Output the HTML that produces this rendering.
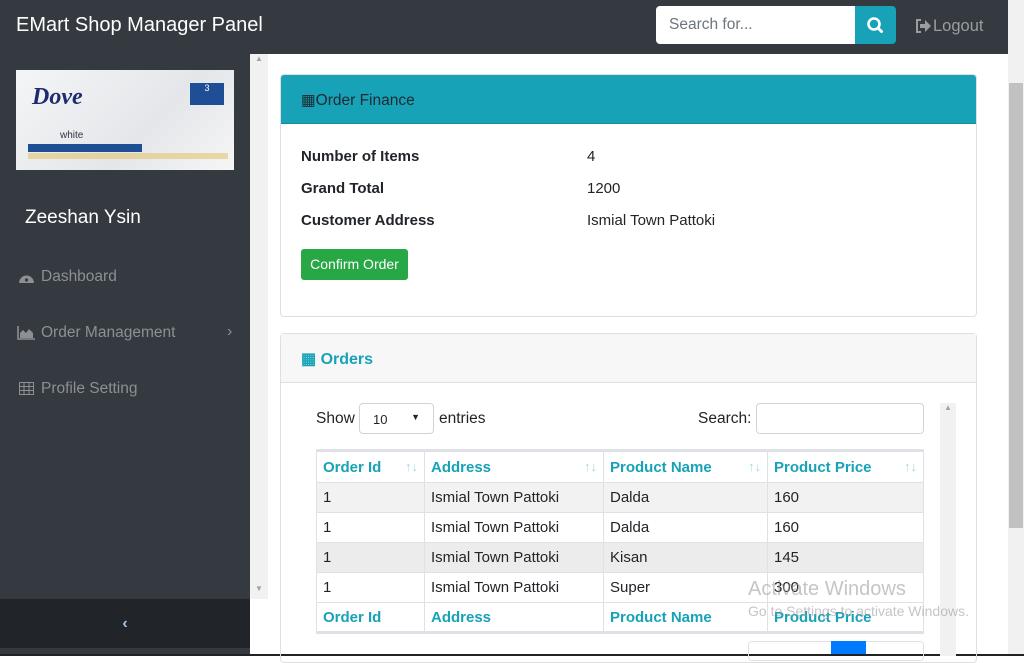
<!DOCTYPE html>
<html><head><meta charset="utf-8"><style>
*{box-sizing:border-box;margin:0;padding:0}
body{width:1024px;height:656px;overflow:hidden;background:#fff;font-family:"Liberation Sans",sans-serif;position:relative;color:#212529}
.a{position:absolute}
.nav{left:0;top:0;width:1008px;height:54px;background:#343a40}
.side{left:0;top:54px;width:250px;height:545px;background:#343a40}
.menu{color:#8c9094;font-size:15.5px;left:41px}
.ic{position:absolute;left:18px;color:#8c9094;font-size:14px}
td,th{font-size:15px;text-align:left;padding:0 6px;border:1px solid #dee2e6;height:30px}
th{color:#17a2b8;font-weight:bold}
table{border-collapse:collapse;position:absolute;left:316px;top:449px;width:608px;border-top:3px solid #dee2e6;border-bottom:3px solid #dee2e6}
.so{float:right;color:#a8d9e2;font-size:13px;font-weight:normal}
</style></head><body>
<div class="a nav"></div>
<div class="a" style="left:16px;top:14px;color:#fff;font-size:20px">EMart Shop Manager Panel</div>
<div class="a" style="left:656px;top:6px;width:200px;height:38px;background:#fff;border-radius:4px 0 0 4px;padding:10px 13px;color:#6c757d;font-size:15.5px">Search for...</div>
<div class="a" style="left:855px;top:6px;width:41px;height:38px;background:#17a2b8;border-radius:0 4px 4px 0">
<svg width="41" height="38"><circle cx="19" cy="18" r="5.5" fill="none" stroke="#fff" stroke-width="2.6"/><line x1="23" y1="22" x2="26.5" y2="25.5" stroke="#fff" stroke-width="3" stroke-linecap="round"/></svg></div>
<svg class="a" style="left:915px;top:19px" width="16" height="14"><path d="M6 1H2v12h4" fill="none" stroke="#9a9da1" stroke-width="2"/><path d="M5 5h5V1l6 6-6 6V9H5z" fill="#9a9da1"/></svg>
<div class="a" style="left:933px;top:17px;color:#9a9da1;font-size:16.5px">Logout</div>
<div class="a side"></div>
<div class="a" style="left:16px;top:70px;width:218px;height:100px;background:linear-gradient(135deg,#f4f5f6,#e4e6ea 60%,#f6f6f6)">
<div class="a" style="left:16px;top:14px;font:italic bold 24px 'Liberation Serif',serif;color:#1c2d6e">Dove</div>
<div class="a" style="left:174px;top:13px;width:34px;height:22px;background:#1d4e96;color:#fff;font-size:9px;text-align:center">3</div>
<div class="a" style="left:44px;top:60px;font-size:10px;color:#334">white</div>
<div class="a" style="left:12px;top:74px;width:114px;height:8px;background:#1d4e96"></div>
<div class="a" style="left:12px;top:83px;width:200px;height:6px;background:#e3c46e;opacity:.6"></div>
</div>
<div class="a" style="left:25px;top:207px;color:#fff;font-size:19px">Zeeshan Ysin</div>
<svg class="a" style="left:18px;top:270px" width="17" height="14"><path d="M1 13A7.5 7.5 0 1 1 16 13Z" fill="#8c9094"/><circle cx="8.5" cy="10" r="1.6" fill="#343a40"/></svg>
<div class="a menu" style="top:268px">Dashboard</div>
<svg class="a" style="left:17px;top:325px" width="19" height="15"><path d="M1 1v13h17" fill="none" stroke="#8c9094" stroke-width="1.6"/><path d="M3 13V8l3-3 3 3 3-4 4 4v5z" fill="#8c9094"/></svg>
<div class="a menu" style="top:324px">Order Management</div>
<div class="a" style="left:227px;top:323px;color:#8c9094;font-size:16px">›</div>
<svg class="a" style="left:19px;top:382px" width="15" height="13"><rect x=".5" y=".5" width="14" height="12" fill="none" stroke="#8c9094"/><path d="M0 4.5h15M0 8.5h15M5 0v13M10 0v13" stroke="#8c9094"/></svg>
<div class="a menu" style="top:380px">Profile Setting</div>
<div class="a" style="left:0;top:599px;width:250px;height:49px;background:#212529;color:#a8c8e8;text-align:center;line-height:49px;font-size:16px;font-weight:bold">‹</div>
<div class="a" style="left:0;top:648px;width:250px;height:8px;background:#343a40"></div>
<div class="a" style="left:0;top:654px;width:1024px;height:2px;background:#222"></div>
<div class="a" style="left:250px;top:54px;width:18px;height:545px;background:#f1f1f1;color:#a3a3a3;font-size:8px;text-align:center">▲<div class="a" style="left:5px;top:530px">▼</div></div>
<div class="a" style="left:1008px;top:0;width:16px;height:654px;background:#f1f1f1"><div class="a" style="left:1px;top:83px;width:14px;height:445px;background:#c1c1c1"></div></div>
<div class="a" style="left:280px;top:74px;width:697px;height:243px;border:1px solid #dfdfdf;border-radius:4px"></div>
<div class="a" style="left:281px;top:75px;width:695px;height:49px;background:#17a2b8;border-bottom:1px solid #138c9e;border-radius:3px 3px 0 0;padding:16px 20px;font-size:15.5px;color:#1e2a30">▦Order Finance</div>
<div class="a" style="left:301px;top:141px;font-weight:bold;font-size:15px;line-height:32px">Number of Items<br>Grand Total<br>Customer Address</div>
<div class="a" style="left:587px;top:141px;font-size:15px;line-height:32px">4<br>1200<br>Ismial Town Pattoki</div>
<div class="a" style="left:301px;top:249px;width:107px;height:31px;background:#28a745;border-radius:3px;color:#fff;font-size:14px;text-align:center;line-height:31px">Confirm Order</div>
<div class="a" style="left:280px;top:333px;width:697px;height:330px;border:1px solid #dfdfdf;border-radius:4px"></div>
<div class="a" style="left:281px;top:334px;width:695px;height:49px;background:#f7f7f7;border-bottom:1px solid #dfdfdf;padding:15px 20px;font-size:16px;color:#17a2b8;font-weight:bold">▦ Orders</div>
<div class="a" style="left:940px;top:403px;width:16px;height:253px;background:#f1f1f1;color:#a3a3a3;font-size:8px;text-align:center">▲</div>
<div class="a" style="left:316px;top:410px;font-size:15.5px">Show</div>
<div class="a" style="left:359px;top:403px;width:75px;height:31px;border:1px solid #ced4da;border-radius:4px;font-size:13px;padding:8px 13px">10<span style="float:right;font-size:9px">▼</span></div>
<div class="a" style="left:439px;top:410px;font-size:15.5px">entries</div>
<div class="a" style="left:698px;top:410px;font-size:15.5px">Search:</div>
<div class="a" style="left:756px;top:403px;width:168px;height:31px;border:1px solid #ced4da;border-radius:4px"></div>
<table>
<tr style="height:32px"><th style="width:108px">Order Id<span class="so">↑↓</span></th><th style="width:179px">Address<span class="so">↑↓</span></th><th style="width:164px">Product Name<span class="so">↑↓</span></th><th>Product Price<span class="so">↑↓</span></th></tr>
<tr style="background:#f2f2f2"><td>1</td><td>Ismial Town Pattoki</td><td>Dalda</td><td>160</td></tr>
<tr><td>1</td><td>Ismial Town Pattoki</td><td>Dalda</td><td>160</td></tr>
<tr style="background:#ececec"><td>1</td><td>Ismial Town Pattoki</td><td>Kisan</td><td>145</td></tr>
<tr><td>1</td><td>Ismial Town Pattoki</td><td>Super</td><td>300</td></tr>
<tr><th>Order Id</th><th>Address</th><th>Product Name</th><th>Product Price</th></tr>
</table>
<div class="a" style="left:748px;top:641px;width:176px;height:20px;border:1px solid #dee2e6;border-radius:4px"></div>
<div class="a" style="left:831px;top:641px;width:35px;height:13px;background:#007bff"></div>
<div class="a" style="left:748px;top:578px;color:rgba(150,150,150,.55);font-size:20px">Activate Windows</div>
<div class="a" style="left:748px;top:603px;color:rgba(150,150,150,.55);font-size:14px">Go to Settings to activate Windows.</div>
</body></html>
